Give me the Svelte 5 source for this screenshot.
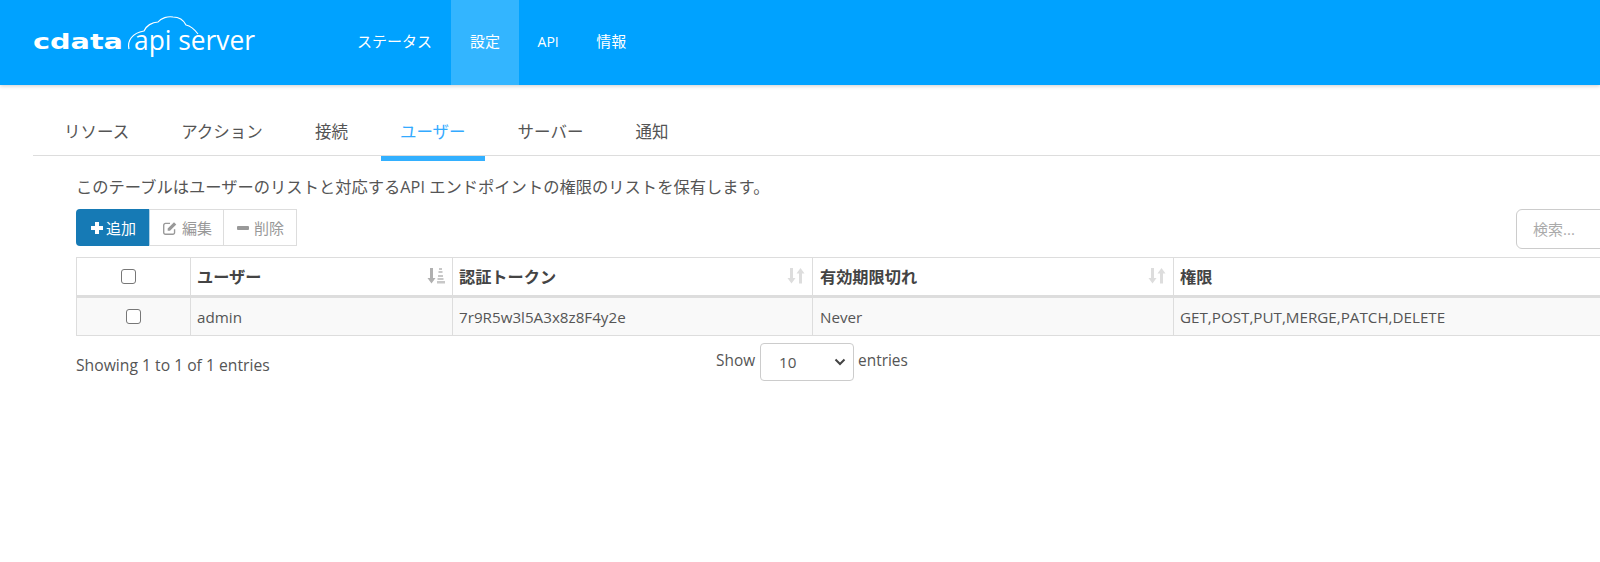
<script>
  const nav = [
    { label: 'ステータス' },
    { label: '設定', active: true },
    { label: 'API', latin: true },
    { label: '情報' }
  ];
  const tabs = ['リソース', 'アクション', '接続', 'ユーザー', 'サーバー', '通知'];
  const columns = [
    { label: 'ユーザー', sort: 'alpha' },
    { label: '認証トークン', sort: 'both' },
    { label: '有効期限切れ', sort: 'both' },
    { label: '権限', sort: '' }
  ];
  const row = ['admin', '7r9R5w3l5A3x8z8F4y2e', 'Never', 'GET,POST,PUT,MERGE,PATCH,DELETE'];
</script>

<div class="page">
  <header class="header">
    <div class="logo">
      <svg width="240" height="50" viewBox="0 0 240 50" aria-label="CData API Server">
        <text class="wordmark" x="0" y="36" textLength="90" lengthAdjust="spacingAndGlyphs">cdata</text>
        <path class="cloud" d="M96 36 C94 28 99 20 111 18 C113 13 119 9 125 9 C128 5 135 3 140 4 C147 4 151 8 153 12 C158 13 162 17 165 21" />
        <text class="product" x="101" y="37" textLength="121" lengthAdjust="spacingAndGlyphs">api server</text>
      </svg>
    </div>
    <nav class="nav">
      {#each nav as item}
        <span class="nav-item" class:active={item.active} class:latin={item.latin}>{item.label}</span>
      {/each}
    </nav>
  </header>

  <main class="main">
    <div class="tabs">
      {#each tabs as tab}
        <span class="tab" class:current={tab === 'ユーザー'}>{tab}</span>
      {/each}
    </div>

    <section class="content">
      <p class="desc">このテーブルはユーザーのリストと対応するAPI エンドポイントの権限のリストを保有します。</p>

      <div class="toolbar">
        <div class="btn-group">
          <span class="btn primary">
            <svg class="ico" viewBox="0 0 14 14"><path d="M5 1h4v4h4v4H9v4H5V9H1V5h4z" fill="#fff"/></svg>追加
          </span>
          <span class="btn edit">
            <svg class="ico wide" viewBox="0 0 14 14"><path d="M11 8v3a1.500 1.500 0 0 1-1.500 1.500H3A1.500 1.500 0 0 1 1.500 11V4.500A1.500 1.500 0 0 1 3 3h4" fill="none" stroke="#999" stroke-width="1.200"/><path d="M5 7.500 10.500 2 12.500 4 7 9.500H5z" fill="#999"/></svg>編集
          </span>
          <span class="btn remove">
            <svg class="ico" viewBox="0 0 14 14"><rect x="1" y="5" width="12" height="4" rx="1" fill="#999"/></svg>削除
          </span>
        </div>
        <div class="search">検索...</div>
      </div>

      <table class="table">
        <thead>
          <tr>
            <th class="check-col"><span class="checkbox head"></span></th>
            {#each columns as col}
              <th>
                <div class="th-inner">
                  <span>{col.label}</span>
                  {#if col.sort === 'alpha'}
                    <svg class="sort" viewBox="0 0 18 16"><path d="M3 0h3v10h2.500L4.500 15.500.5 10H3z" fill="#b0b0b0"/><path d="M12 0h3v2h-3zM11.500 3h4v2h-4zM11 7h5v2h-5zM10.500 10h6v2h-6zM10 13h8v2.500h-8z" fill="#c8c8c8"/></svg>
                  {:else if col.sort === 'both'}
                    <svg class="sort" viewBox="0 0 18 16"><path d="M3 0h3v10h2.500L4.500 15.500.5 10H3z" fill="#ddd"/><path d="M12 15.500h3V5.500h2.500L13.500 0 9.500 5.500H12z" fill="#ddd"/></svg>
                  {/if}
                </div>
              </th>
            {/each}
          </tr>
        </thead>
        <tbody>
          <tr>
            <td class="check-col"><span class="checkbox body"></span></td>
            {#each row as cell}
              <td>{cell}</td>
            {/each}
          </tr>
        </tbody>
      </table>

      <div class="footer">
        <span class="info">Showing 1 to 1 of 1 entries</span>
        <div class="length">
          <span class="length-label">Show</span>
          <span class="select">10
            <svg width="12" height="8" viewBox="0 0 12 8"><path d="M1.500 1.500 6 6l4.500-4.500" fill="none" stroke="#444" stroke-width="2"/></svg>
          </span>
          <span class="length-label entries">entries</span>
        </div>
      </div>
    </section>
  </main>
</div>

<style>
  :global(body) {
    margin: 0;
    background: #fff;
    overflow: hidden;
  }
  .page {
    width: 1600px;
    height: 562px;
    overflow: hidden;
    font-family: "Open Sans", "Noto Sans CJK JP", sans-serif;
    font-size: 15.200px;
    color: #555;
  }
  .header {
    height: 85px;
    background: #00a2ff;
    display: flex;
    box-shadow: 0 1px 4px rgba(0, 0, 0, 0.2);
  }
  .logo {
    width: 338px;
    padding: 13px 0 0 33px;
    box-sizing: border-box;
  }
  .logo svg { display: block; }
  .wordmark {
    font-family: "DejaVu Sans", sans-serif;
    font-weight: 700;
    font-size: 21px;
    fill: #fff;
  }
  .product {
    font-family: "Open Sans", sans-serif;
    font-weight: 400;
    font-size: 27px;
    fill: #fff;
  }
  .cloud {
    fill: none;
    stroke: #fff;
    stroke-width: 1.200;
  }
  .nav {
    display: flex;
    height: 85px;
  }
  .nav-item {
    padding: 0 19px;
    line-height: 83px;
    color: #fff;
    font-size: 15px;
  }
  .nav-item.latin {
    font-size: 14px;
    padding: 0 18.500px;
  }
  .nav-item.active {
    background: #33b5ff;
  }
  .main {
    padding: 0 0 0 33px;
  }
  .tabs {
    display: flex;
    height: 71px;
    padding-left: 12px;
    box-sizing: border-box;
    border-bottom: 1px solid #ddd;
  }
  .tab {
    padding: 34px 19px 0;
    height: 76px;
    box-sizing: border-box;
    margin-right: 14px;
    font-size: 16.500px;
    line-height: 26px;
    color: #555;
    white-space: nowrap;
  }
  .tab.current {
    color: #33aaff;
    border-bottom: 5px solid #33b0ff;
  }
  .content {
    padding-left: 43px;
  }
  .desc {
    margin: 0;
    padding-top: 20px;
    line-height: 22px;
    font-size: 16.300px;
    color: #555;
    white-space: nowrap;
  }
  .toolbar {
    display: flex;
    margin-top: 11px;
    height: 40px;
    width: 1600px;
  }
  .btn-group {
    display: flex;
    height: 37px;
    width: 221px;
    flex: none;
    font-size: 15px;
  }
  .btn {
    display: flex;
    align-items: center;
    gap: 5px;
    padding-left: 13px;
    border: 1px solid #ddd;
    border-left: 0;
    color: #999;
    line-height: 20px;
    box-sizing: border-box;
    white-space: nowrap;
  }
  .btn.primary {
    background: #167ab5;
    border: 0;
    color: #fff;
    width: 73px;
    gap: 2px;
    border-radius: 4px 0 0 4px;
    padding-left: 14px;
  }
  .btn.edit {
    width: 75px;
    border-left: 1px solid #b5d3e6;
    padding-left: 12px;
    gap: 4px;
  }
  .btn.remove {
    width: 73px;
    padding-left: 12px;
    gap: 4px;
  }
  .ico {
    width: 14px;
    height: 14px;
    flex: none;
  }
  .ico.wide {
    width: 16px;
    height: 16px;
  }
  .search {
    margin-left: 1219px;
    width: 200px;
    height: 40px;
    flex: none;
    box-sizing: border-box;
    border: 1px solid #ccc;
    border-radius: 6px;
    padding-left: 16px;
    line-height: 38px;
    color: #aaa;
    font-size: 15px;
  }
  .table {
    border-collapse: collapse;
    table-layout: fixed;
    width: 1700px;
    margin-top: 8px;
    border-left: 1px solid #ddd;
  }
  .table th, .table td {
    border: 1px solid #ddd;
    padding: 0 6px;
    text-align: left;
    box-sizing: border-box;
    white-space: nowrap;
  }
  .table th {
    height: 39px;
    border-bottom: 3px solid #ddd;
    font-weight: 700;
    font-size: 16.200px;
    color: #444;
  }
  .table td {
    height: 39px;
    background: #f9f9f9;
  }
  .check-col { width: 114px; }
  .table th:nth-child(2), .table td:nth-child(2) { width: 262px; }
  .table th:nth-child(3), .table td:nth-child(3) { width: 360px; }
  .table th:nth-child(4), .table td:nth-child(4) { width: 361px; }
  .table th.check-col, .table td.check-col { text-align: left; padding: 0; }
  .table th:nth-child(4), .table td:nth-child(4) { padding-left: 7px; }
  .th-inner {
    display: flex;
    justify-content: space-between;
    align-items: center;
    padding-bottom: 2px;
  }
  .sort {
    width: 18px;
    height: 16px;
    margin-right: 1px;
  }
  .checkbox {
    display: block;
    width: 13px;
    height: 13px;
    border: 1px solid #777;
    border-radius: 3px;
    background: #fff;
  }
  .checkbox.head { margin-left: 44px; }
  .checkbox.body { margin-left: 49px; }
  .footer {
    display: flex;
    height: 46px;
    align-items: flex-start;
  }
  .info {
    margin-top: 18px;
    line-height: 22px;
    width: 641px;
    white-space: nowrap;
    flex: none;
    font-size: 15.700px;
  }
  .length {
    display: flex;
    align-items: center;
    gap: 5px;
    margin-top: 7px;
    margin-left: -1px;
  }
  .length-label {
    padding-bottom: 4px;
    font-size: 15.400px;
  }
  .length-label.entries {
    margin-left: -1px;
  }
  .select {
    width: 94px;
    height: 38px;
    box-sizing: border-box;
    border: 1px solid #ccc;
    border-radius: 4px;
    padding: 0 7px 0 18px;
    display: flex;
    justify-content: space-between;
    align-items: center;
  }
</style>
